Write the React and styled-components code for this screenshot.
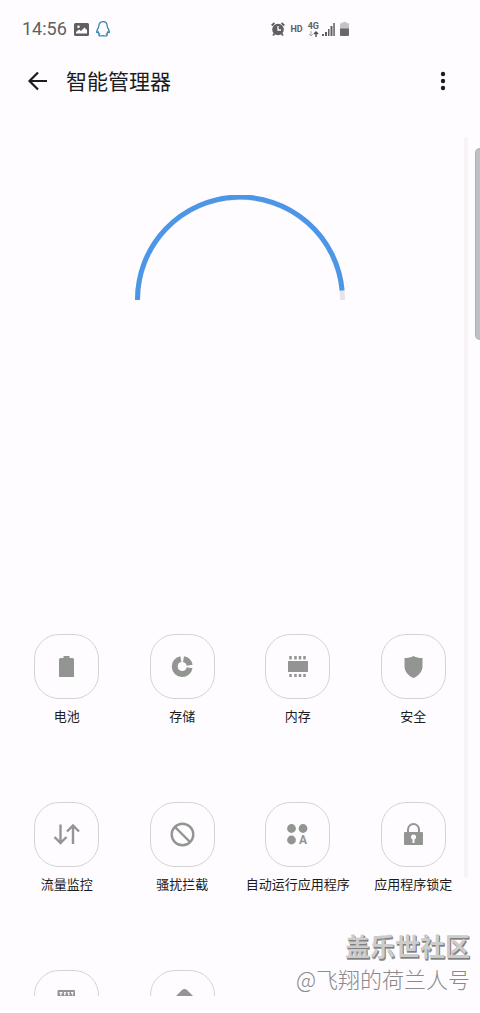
import React from "react";
import styled, { createGlobalStyle } from "styled-components";

const GlobalStyle = createGlobalStyle`
  * {
    box-sizing: border-box;
  }
  body {
    margin: 0;
    background: #fefcff;
    color: #1c1c1e;
    font-family: Roboto, "Noto Sans CJK SC", sans-serif;
  }
`;

const Page = styled.div`
  position: relative;
  display: flex;
  flex-direction: column;
  height: 100vh;
  padding-bottom: 17px;
  overflow: hidden;
`;

const StatusBar = styled.div`
  display: flex;
  justify-content: space-between;
  align-items: center;
  height: 36px;
  margin-top: 11px;
  padding: 0 131px 0 22px;
  color: #606060;
`;

const StatusGroup = styled.div`
  display: flex;
  align-items: center;
  gap: ${(props) => props.$gap};
`;

const Clock = styled.span`
  font-size: 18px;
  line-height: 20px;
`;

const Tag = styled.span`
  font-size: 9px;
  font-weight: 700;
  line-height: 10px;
`;

const Network = styled.span`
  display: flex;
  flex-direction: column;
  align-items: center;
`;

const Header = styled.header`
  display: flex;
  align-items: center;
  height: 68px;
  padding: 0 27px;
`;

const IconButton = styled.button`
  display: flex;
  padding: 0;
  border: none;
  background: none;
  color: #1c1c1e;
  cursor: pointer;
`;

const Title = styled.h1`
  flex: 1;
  margin: 0 0 0 18px;
  padding-top: 2px;
  font-size: 21px;
  font-weight: 400;
  line-height: 28px;
`;

const Main = styled.main`
  flex: 1;
  min-height: 0;
  overflow: hidden;
`;

const Gauge = styled.div`
  display: flex;
  justify-content: center;
  padding-top: 80px;
  margin-bottom: 334px;
`;

const Grid = styled.div`
  display: grid;
  grid-template-columns: repeat(4, 1fr);
  row-gap: 76px;
  padding: 0 9px;
`;

const Item = styled.button`
  display: flex;
  flex-direction: column;
  align-items: center;
  gap: 9px;
  padding: 0;
  border: none;
  background: none;
  color: inherit;
  font-family: inherit;
  font-size: 13px;
  line-height: 18px;
  white-space: nowrap;
  cursor: pointer;
`;

const Tile = styled.span`
  display: flex;
  justify-content: center;
  align-items: center;
  width: 65px;
  height: 65px;
  border: 1px solid #d3d3d5;
  border-radius: 25px;
  color: #929592;
`;

const Rail = styled.div`
  position: absolute;
  top: 137px;
  right: 12px;
  bottom: 135px;
  width: 4px;
  border-radius: 2px;
  background: #f7f3f7;
`;

const EdgeHandle = styled.div`
  position: absolute;
  top: 148px;
  right: 0;
  width: 5px;
  height: 192px;
  border: 1px solid #aeb2b6;
  border-right: none;
  border-radius: 5px 0 0 5px;
  background: #bcc1c6;
`;

const Watermark = styled.div`
  position: absolute;
  right: 10px;
  bottom: 18px;
  display: flex;
  flex-direction: column;
  align-items: flex-end;
  font-family: "Noto Sans CJK SC", sans-serif;
  line-height: 33px;
  white-space: nowrap;
`;

const Community = styled.span`
  color: #cccccc;
  font-size: 25px;
  font-weight: 700;
  text-shadow: 1px 1px 0 #808080, 1px 2px 0 #a0a0a0;
`;

const Author = styled.span`
  color: #8a8a8a;
  font-size: 22px;
  font-weight: 300;
`;

const icons = {
  battery: <path d="M9.500 2h6v2h3q1.500 0 1.500 1.500V23H5V5.500Q5 4 6.500 4h3z" />,
  storage: (
    <g fill="none" stroke="currentColor" strokeWidth="6">
      <path d="M13.500 5.100A7.500 7.500 0 0 1 19.600 11.200" />
      <path d="M10.900 5.100A7.500 7.500 0 1 0 19.600 13.800" />
    </g>
  ),
  memory: (
    <>
      <path d="M3 7h20v11H3z" />
      <path
        d="M5.500 2v3.500M10.500 2v3.500M15 2v3.500M19.500 2v3.500M5.500 20v3M10.500 20v3M15 20v3M19.500 20v3"
        stroke="currentColor"
        strokeWidth="2.500"
      />
    </>
  ),
  security: (
    <path d="M12.500 2c2.500 1.500 5.500 2 9 2v8.500c0 5.500-4.500 9.500-9 11.500-4.500-2-9-6-9-11.500V4c3.500 0 6.500-.5 9-2z" />
  ),
  traffic: (
    <path
      d="M6.500 2.500v18M.5 15l6 6 6-6M19 22V3.500M13 9.500l6-6 6 6"
      fill="none"
      stroke="currentColor"
      strokeWidth="2.400"
    />
  ),
  block: (
    <g fill="none" stroke="currentColor" strokeWidth="2.400">
      <circle cx="12.500" cy="12.500" r="10.800" />
      <path d="M5 5l15 15" />
    </g>
  ),
  autorun: (
    <>
      <circle cx="6.500" cy="6.500" r="4.400" />
      <circle cx="18" cy="6.500" r="4.400" />
      <circle cx="6.500" cy="18" r="4.400" />
      <text x="18" y="22" textAnchor="middle" fontSize="12" fontWeight="700">
        A
      </text>
    </>
  ),
  lock: (
    <>
      <path
        d="M7 11V7.500a5.500 5.500 0 0 1 11 0V11"
        fill="none"
        stroke="currentColor"
        strokeWidth="2"
      />
      <path d="M4 10h17q1 0 1 1v11q0 1-1 1H4q-1 0-1-1V11q0-1 1-1z" />
      <circle cx="12.500" cy="15" r="2.500" fill="#fefcff" />
      <path d="M11.500 15h2v6h-2z" fill="#fefcff" />
    </>
  ),
  keyboard: (
    <>
      <path d="M4.500 0h15.500q1 0 1 1v13H3.500V1q0-1 1-1z" />
      <path
        d="M5.500 2.800h3M10 2.800h2M13.500 2.800h2M17 2.800h2.500M6 4.500h1.500M10 4.500h1.500M14 4.500h1.500M18 4.500h1"
        stroke="#fefcff"
        strokeWidth="1.600"
      />
    </>
  ),
  rise: <path d="M14.500-1q1.500 0 2.500 1l7 7H5l7-7q1-1 2.500-1z" />,
};

const items = [
  { icon: "battery", label: "电池" },
  { icon: "storage", label: "存储" },
  { icon: "memory", label: "内存" },
  { icon: "security", label: "安全" },
  { icon: "traffic", label: "流量监控" },
  { icon: "block", label: "骚扰拦截" },
  { icon: "autorun", label: "自动运行应用程序" },
  { icon: "lock", label: "应用程序锁定" },
  { icon: "keyboard" },
  { icon: "rise" },
];

const Status = () => (
  <StatusBar>
    <StatusGroup $gap="7px">
      <Clock>14:56</Clock>
      <svg width="15" height="13" viewBox="0 0 15 13">
        <rect width="15" height="13" rx="1.500" fill="#606060" />
        <path d="M2 10.500V9l3-2.500 2 1.500 3.500-3.500L13 7v3.500z" fill="#fefcff" />
        <circle cx="4.500" cy="3.800" r="1.300" fill="#fefcff" />
      </svg>
      <svg width="14" height="16" viewBox="0 0 14 16">
        <path
          d="M7 .7C4.300.7 2.800 2.700 2.800 5.200c0 1.500-1.800 3.300-2.100 5.500-.1 1.200.6 1.200 1.500.3.200.8.700 1.500 1.300 2-1.500.8-.7 2 1.500 2 .9 0 1.500-.2 2-.5.500.3 1.100.5 2 .5 2.200 0 3-1.200 1.500-2 .6-.5 1.100-1.200 1.300-2 .9.9 1.600.9 1.500-.3-.3-2.200-2.100-4-2.100-5.500C11.200 2.700 9.700.7 7 .7z"
          fill="none"
          stroke="#2d80b4"
          strokeWidth="1.200"
        />
      </svg>
    </StatusGroup>
    <StatusGroup $gap="5px">
      <svg width="14" height="14" viewBox="0 0 14 14">
        <circle cx="7" cy="7.500" r="5.800" fill="#606060" />
        <path
          d="M.7 3.500L3.500 1M13.300 3.500L10.500 1M3.500 11.500L2 13.500M10.500 11.500l1.500 2"
          stroke="#606060"
          strokeWidth="1.800"
        />
        <path d="M7 4v4h3" fill="none" stroke="#fefcff" strokeWidth="1.300" />
      </svg>
      <Tag>HD</Tag>
      <StatusGroup $gap="3px">
        <Network>
          <Tag>4G</Tag>
          <svg width="11" height="6" viewBox="0 0 11 6">
            <path d="M3 0v5M1 3l2 2 2-2" fill="none" stroke="#a8a8a8" />
            <path
              d="M8 6V1M6 3l2-2 2 2"
              fill="none"
              stroke="#505050"
              strokeWidth="1.400"
            />
          </svg>
        </Network>
        <svg width="13" height="13" viewBox="0 0 13 13" fill="#606060">
          <path d="M0 11h2v2H0zM3 9h2v4H3zM6 6h1.500v7H6zM8.500 3h2v10h-2zM11.300 0h1.500v13h-1.500z" />
        </svg>
      </StatusGroup>
      <svg width="9" height="14" viewBox="0 0 9 14">
        <path d="M2.500 0h4v1.300H9V7H0V1.300h2.500z" fill="#c4c4c4" />
        <path d="M0 6.500h9V13q0 1-1 1H1q-1 0-1-1z" fill="#6a6769" />
      </svg>
    </StatusGroup>
  </StatusBar>
);

export default () => (
  <>
    <GlobalStyle />
    <Page>
      <Status />
      <Header>
        <IconButton aria-label="返回">
          <svg
            width="21"
            height="20"
            viewBox="0 0 21 20"
            fill="none"
            stroke="currentColor"
            strokeWidth="2.200"
          >
            <path d="M20 10H2.500M11 1.500L2.500 10l8.500 8.500" />
          </svg>
        </IconButton>
        <Title>智能管理器</Title>
        <IconButton aria-label="更多选项">
          <svg width="20" height="20" viewBox="0 0 20 20" fill="currentColor">
            <circle cx="10" cy="3" r="2.200" />
            <circle cx="10" cy="10" r="2.200" />
            <circle cx="10" cy="17" r="2.200" />
          </svg>
        </IconButton>
      </Header>
      <Main>
        <Gauge>
          <svg width="210" height="105" viewBox="0 0 210 105" fill="none">
            <path
              d="M2.500 105a102.500 102.500 0 0 1 205 0"
              stroke="#e6e4e6"
              strokeWidth="5"
            />
            <path
              d="M2.500 105A102.500 102.500 0 0 1 207.100 95.500"
              stroke="#4b96e6"
              strokeWidth="5"
            />
          </svg>
        </Gauge>
        <Grid>
          {items.map(({ icon, label }) => (
            <Item key={icon} aria-label={label || icon}>
              <Tile>
                <svg
                  width="25"
                  height="25"
                  viewBox="0 0 25 25"
                  fill="currentColor"
                  overflow="visible"
                >
                  {icons[icon]}
                </svg>
              </Tile>
              {label}
            </Item>
          ))}
        </Grid>
      </Main>
      <Rail />
      <EdgeHandle />
      <Watermark>
        <Community>盖乐世社区</Community>
        <Author>@飞翔的荷兰人号</Author>
      </Watermark>
    </Page>
  </>
);
